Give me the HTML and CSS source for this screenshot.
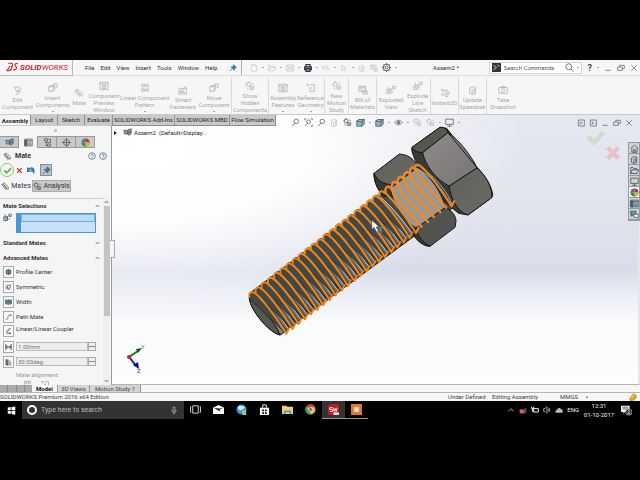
FILE: index.html
```html
<!DOCTYPE html>
<html lang="en">
<head>
<meta charset="utf-8">
<title>Assem2 - SOLIDWORKS</title>
<link rel="stylesheet" href="styles.css">
</head>
<body>
<svg class="defs" width="0" height="0" aria-hidden="true">
  <defs>
    <symbol id="clip" viewBox="0 0 12 12"><path d="M2 2.500 7.500 9c1.600 1.500 3.500-.2 2.300-1.800L5 1.800C3.800.8 2.300 2 3.300 3.300L8 8.500M2 2.500C.8 4 2 5 3 6l4 4.500"/></symbol>
    <symbol id="boxes" viewBox="0 0 12 12"><path d="M1 4.500 3 3h5v5l-2 2H1zM1 4.500h5V10M6 4.500 8 3M7 2V1h4v4H9"/></symbol>
    <symbol id="part" viewBox="0 0 12 12"><path d="M2 2.500h6l2 2-2 3H4zM4 7.500l4-3M5 9l4-1M3 11h4"/></symbol>
    <symbol id="preview" viewBox="0 0 12 12"><path d="M1 1.500h10v9H1zM1 3.500h10M4 5v4h4V5.500zM6 5v4"/></symbol>
    <symbol id="pattern" viewBox="0 0 12 12"><path d="M2 1.500h3v3H2zM7 1.500h3v3H7zM2 7h3v3H2zM7 7h3v3H7zM5 3h2M5 8.500h2"/></symbol>
    <symbol id="fast" viewBox="0 0 12 12"><path d="M1 4h9v7H1zM3 9l6-7M4 6l4 3M8 1l2 2M3 6v3h5"/></symbol>
    <symbol id="gears" viewBox="0 0 12 12"><circle cx="4" cy="4" r="2.500"/><circle cx="8" cy="8" r="2.500"/><path d="M4 .5v2M.5 4h2M8 7v2M7 8h2M8 2l2 2M2 8l2 2"/></symbol>
    <symbol id="geom" viewBox="0 0 12 12"><path d="M2 1v3M.5 2.500h3M5 2h5v8H5V5M5 5l2 1"/></symbol>
    <symbol id="bom" viewBox="0 0 12 12"><path d="M1 1.500h8v6H1zM1 3.500h8M4 1.500v6M6 7h5v4H6zM7 9h3"/></symbol>
    <symbol id="explode" viewBox="0 0 12 12"><path d="M1 5h5v5H1zM6 5l2-2M8 1.500h3v3H8zM3 2v2M8 7v2"/><circle cx="4" cy="7" r="1.500"/></symbol>
    <symbol id="instant" viewBox="0 0 12 12"><path d="M1 2l5 1 4 5-4-1zM6 3l2-1 3 4-1 2M2 7l7 4M2 7v2M9 11V9"/></symbol>
    <symbol id="camera" viewBox="0 0 12 12"><path d="M1 3h10v7H1zM4 3V1.500h4V3"/><circle cx="6" cy="6.500" r="2"/></symbol>
    <symbol id="doc" viewBox="0 0 12 12"><path d="M2.500 1h5l2.500 2.500V11H2.500zM7.500 1v2.500H10"/></symbol>
    <symbol id="folder" viewBox="0 0 12 12"><path d="M1 10V2h3l1 1.500h4V5M1 10l2-5h8.500l-2 5z"/></symbol>
    <symbol id="save" viewBox="0 0 12 12"><path d="M1 1.500h10v9H1zM3 1.500V5h6V1.500M3 10.500V7h6v3.500"/></symbol>
    <symbol id="print" viewBox="0 0 12 12"><path d="M3 4.500V1h6v3.500M1 4.500h10v4H1z"/><path d="M3 7v4h6V7z" fill="#6fa5dd"/></symbol>
    <symbol id="undo" viewBox="0 0 12 12"><path d="M1 2v5h4M1 6c3-5 8-4 8 0v4M5 5c2-1 2 0 2 3"/></symbol>
    <symbol id="arrow" viewBox="0 0 12 12"><path d="M3 1v9l2.500-2.500H9zM6 8l1.500 3"/></symbol>
    <symbol id="lens" viewBox="0 0 12 12"><circle cx="7" cy="4.500" r="3"/><path d="M5 7 1.500 11"/></symbol>
    <symbol id="lensbox" viewBox="0 0 12 12"><circle cx="6" cy="5" r="2.500"/><path d="M4.500 7 1.500 10.500M1 3V1h2M9 1h2v2M11 9v2H9"/></symbol>
    <symbol id="cube" viewBox="0 0 12 12"><path d="M1 4 4 2h7v6l-3 3H1z" fill="#83b8cf"/><path d="M1 4h7v7M8 4l3-2"/><path d="M4 2h7L8 4H1z" fill="#d9edf3"/></symbol>
    <symbol id="eye" viewBox="0 0 12 12"><path d="M1 6c3-4 7-4 10 0-3 4-7 4-10 0z"/><circle cx="6" cy="6" r="1.500" fill="#555"/></symbol>
    <symbol id="ball" viewBox="0 0 12 12"><circle cx="6" cy="6" r="5" fill="#eee"/><path d="M6 6V1a5 5 0 0 0-5 5z" fill="#3c78c8" stroke="none"/><path d="M6 6h5a5 5 0 0 0-5-5z" fill="#d32b22" stroke="none"/><path d="M6 6v5a5 5 0 0 0 5-5z" fill="#eab421" stroke="none"/><path d="M6 6H1a5 5 0 0 0 5 5z" fill="#38923f" stroke="none"/></symbol>
    <symbol id="screen" viewBox="0 0 12 12"><path d="M1 1.500h10v7H1zM6 8.500V11M3 11h6"/></symbol>
    <symbol id="pin" viewBox="0 0 12 12"><path d="M7 1l4 4-1 .5-2 2v2L2.800 4.500h2l2-2zM5 7 1.500 10.500" fill="#2f83a8"/></symbol>
    <symbol id="restore" viewBox="0 0 12 12"><path d="M4 4V2h7v5H9M1 4.500h7v5H1z"/></symbol>
    <symbol id="close" viewBox="0 0 12 12"><path d="M2 2l8 8M10 2l-8 8"/></symbol>
    <symbol id="min" viewBox="0 0 12 12"><path d="M2 9.500h8"/></symbol>
    <symbol id="pane-l" viewBox="0 0 12 12"><path d="M2 1.500h9v9H2zM5 4v4M8 6H6"/></symbol>
    <symbol id="help" viewBox="0 0 12 12"><circle cx="6" cy="6" r="5"/><path d="M4.500 5c0-2 3.500-2 3.300 0C7.600 6 6 6 6 7.500M6 8.500v1"/></symbol>
    <symbol id="check" viewBox="0 0 12 12"><path d="M1 6.500 3 5l2 2.500L10 2l1.500 1.500L5 10.500z"/></symbol>
    <symbol id="list" viewBox="0 0 12 12"><path d="M1 1.500h10v9H1zM1 3h10M5 5h5M5 7h5M5 9h5"/><path d="M1 3h3v7.500H1z" fill="#356f96"/></symbol>
    <symbol id="target" viewBox="0 0 12 12"><circle cx="6" cy="6" r="4"/><path d="M6 0v12M0 6h12"/></symbol>
    <symbol id="tree" viewBox="0 0 12 12"><path d="M2 1h4v3H2zM4 4v6h3M6 8h4v3H6zM7 1.500h3V6H4"/></symbol>
    <symbol id="asm" viewBox="0 0 12 12"><path d="M1 3h5v5H2zM7 2l4-1v6L8 10 6 8z" fill="#6fa3be"/><path d="M8 4v4M9.500 4v3"/></symbol>
    <symbol id="house" viewBox="0 0 12 12"><path d="M1 6 6 1.500 11 6M2.500 5.500V11h7V5.500M5 11V7.500h2V11"/></symbol>
    <symbol id="books" viewBox="0 0 12 12"><path d="M2 4l3-2 4 1v7l-3 1.500L2 10zM5 4.500V11M7.500 4v6"/></symbol>
    <symbol id="chat" viewBox="0 0 12 12"><path d="M1 1.500h7v5H4L2 8.500V6.500H1z" fill="#5b98b8"/><path d="M5 5.500h6v4h-1v1.500L8 9.500H5z" fill="#fff"/></symbol>
    <symbol id="profile" viewBox="0 0 12 12"><circle cx="6" cy="6" r="4.500" fill="#9cc7d5"/><path d="M3 4h6v4H3zM6 2v8"/></symbol>
    <symbol id="symm" viewBox="0 0 12 12"><path d="M4 3h5v5H4zM1 10l3-3M9 3l2-2M2 4v4M4 10h4"/></symbol>
    <symbol id="width" viewBox="0 0 12 12"><path d="M1 2l3 1v7L1 9zM11 2 8 3v7l3-1z" fill="#5796ae"/><path d="M5 3v4M7 3v4M6 1v10"/></symbol>
    <symbol id="path" viewBox="0 0 12 12"><path d="M1 10c3 1 4-1 4-3 0-3 1-4 3-4h2M9 1l2 2-2 2"/></symbol>
    <symbol id="linear" viewBox="0 0 12 12"><path d="M10 1 5 6M8 1 3 6M3 6v2h3M2 10h8M7 9l3 1-3 1.500"/></symbol>
    <symbol id="dist" viewBox="0 0 12 12"><path d="M1.500 1v10M10.500 1v10M2 6h8M4 4 2 6l2 2M8 4l2 2-2 2" stroke-width="1.500"/></symbol>
    <symbol id="angle" viewBox="0 0 12 12"><path d="M2 1v10h9M2 2c5 0 8 3 8 7M4 11V4l5 6"/><path d="M2 3l3 1v7H2z" fill="#4b93b0"/></symbol>
    <linearGradient id="faceA" x1="0" y1="0" x2="1" y2="1"><stop offset="0" stop-color="#918c8c"/><stop offset="1" stop-color="#777273"/></linearGradient>
    <linearGradient id="faceB" x1="0" y1="0" x2="1" y2="1"><stop offset="0" stop-color="#5f625b"/><stop offset="1" stop-color="#6d6967"/></linearGradient>
    <g id="groove" fill="none">
      <path d="M-11 15-2-7 14-3 108 100 101 123 88 110Z" fill="#454742" stroke="#1c1c1a" stroke-width="2"/>
      <path d="M10-1C38 19 78 69 104 107" stroke="#72746f" stroke-width="7"/>
      <path d="M14 0C42 22 82 70 106 104" stroke="#c6c6c2" stroke-width="3"/>
      <path d="M19 0C46 22 86 68 108 100" stroke="#242522" stroke-width="2"/>
    </g>
    <path id="coil" d="M-9 12C-13 2-7-7 2-3 22 6 72 74 101 121L110 103" fill="none" stroke="#ef8720" stroke-width="6" stroke-linejoin="round"/>
    <path id="turn" d="M-8 16C-12 3-4-7 4-2 12 4 12 14 20 26L100 117" fill="none" stroke="#f18a22" stroke-width="7" stroke-linecap="round"/>
  </defs>
</svg>

<div class="app">
  <header class="titlebar">
    <div class="brand">
      <svg class="ds" viewBox="0 0 24 20"><path d="M4 3h6c4 1 3 5-1 7M7 8l-5 9c6 0 9-4 9-8M22 4c-5-2-7 2-4 5s1 7-5 6" fill="none" stroke="#c8232c" stroke-width="2"/></svg>
      <span><b>SOLID</b>WORKS</span>
    </div>
    <nav class="menu"><a href="#">File</a><a href="#">Edit</a><a href="#">View</a><a href="#">Insert</a><a href="#">Tools</a><a href="#">Window</a><a href="#">Help</a></nav>
    <svg class="ic pin"><use href="#pin"/></svg>
    <div class="quick">
      <button aria-label="New"><svg class="ic"><use href="#doc"/></svg></button><i></i>
      <button aria-label="Open"><svg class="ic"><use href="#folder"/></svg></button><i></i>
      <button aria-label="Save"><svg class="ic"><use href="#save"/></svg></button><i></i>
      <button aria-label="Print" class="on"><svg class="ic"><use href="#print"/></svg></button><i></i>
      <button aria-label="Undo"><svg class="ic"><use href="#undo"/></svg></button><i></i>
      <button aria-label="Select"><svg class="ic"><use href="#arrow"/></svg></button><i></i>
      <button aria-label="Rebuild"><svg class="ic"><use href="#books"/></svg></button>
      <button aria-label="Properties"><svg class="ic"><use href="#bom"/></svg></button>
      <button aria-label="Options" class="on thin"><svg class="ic" viewBox="0 0 12 12"><circle cx="6" cy="6" r="4.500"/><circle cx="6" cy="6" r="2"/><path d="M6 0v2M6 10v2M0 6h2M10 6h2M2 2l1 1M9 9l1 1M10 2 9 3M3 9l-1 1"/></svg></button><i></i>
    </div>
    <div class="doc-name">Assem2 *</div>
    <div class="search">
      <svg class="ic" viewBox="0 0 12 12"><path d="M0 0h12v12H0z" fill="#333" stroke="none"/><path d="M2 3l4 3-4 3M7 2l3 3" stroke="#fff"/></svg>
      <input type="text" aria-label="Search Commands" placeholder="Search Commands">
      <svg class="ic" viewBox="0 0 12 12"><circle cx="5" cy="5" r="4"/><path d="m8 8 3.500 3.500"/></svg><i></i>
    </div>
    <div class="winbtns">
      <button aria-label="Help"><b>?</b></button><i></i>
      <button aria-label="Minimize"><svg class="ic"><use href="#min"/></svg></button>
      <button aria-label="Restore"><svg class="ic"><use href="#restore"/></svg></button>
      <button aria-label="Close"><svg class="ic"><use href="#close"/></svg></button>
    </div>
  </header>

  <div class="ribbon">
    <button class="w35"><svg><use href="#part"/></svg>Edit<br>Component</button>
    <button class="w35"><svg><use href="#boxes"/></svg>Insert<br>Components<i></i></button>
    <button class="w18"><svg><use href="#clip"/></svg>Mate</button>
    <button class="w32"><svg><use href="#preview"/></svg>Component<br>Preview<br>Window</button>
    <button class="w49"><svg><use href="#pattern"/></svg>Linear Component<br>Pattern<i></i></button>
    <button class="w28"><svg><use href="#fast"/></svg>Smart<br>Fasteners</button>
    <button class="w35 end"><svg><use href="#boxes"/></svg>Move<br>Component<i></i></button>
    <button class="w37 end"><svg><use href="#gears"/></svg>Show<br>Hidden<br>Components</button>
    <button class="w28"><svg><use href="#preview"/></svg>Assembly<br>Features<i></i></button>
    <button class="w28 end"><svg><use href="#geom"/></svg>Reference<br>Geometry<i></i></button>
    <button class="w24 end"><svg><use href="#gears"/></svg>New<br>Motion<br>Study</button>
    <button class="w28 end"><svg><use href="#bom"/></svg>Bill of<br>Materials</button>
    <button class="w28"><svg><use href="#explode"/></svg>Exploded<br>View</button>
    <button class="w26 end"><svg><use href="#explode"/></svg>Explode<br>Line<br>Sketch</button>
    <button class="w28 end"><svg><use href="#instant"/></svg>Instant3D</button>
    <button class="w28 end"><svg><use href="#books"/></svg>Update<br>Speedpak</button>
    <button class="w32"><svg><use href="#camera"/></svg>Take<br>Snapshot</button>
  </div>

  <main class="stage">
    <div class="tabrow">
      <div class="tabs"><button class="t31 active">Assembly</button><button class="t26">Layout</button><button class="t26">Sketch</button><button class="t28">Evaluate</button><button class="t63">SOLIDWORKS Add-Ins</button><button class="t54">SOLIDWORKS MBD</button><button class="t46">Flow Simulation</button></div>
      <div class="headsup">
        <svg class="ic"><use href="#lens"/></svg><svg class="ic"><use href="#lensbox"/></svg><svg class="ic"><use href="#lens"/></svg><svg class="ic dim"><use href="#books"/></svg><svg class="ic"><use href="#gears"/></svg><svg class="ic"><use href="#cube"/></svg><i></i><svg class="ic"><use href="#cube"/></svg><i></i><svg class="ic"><use href="#eye"/></svg><i></i><svg class="ic dim"><use href="#gears"/></svg><svg class="ic dim"><use href="#gears"/></svg><i></i><svg class="ic"><use href="#screen"/></svg><i></i>
      </div>
      <div class="docbtns">
        <button aria-label="Collapse left"><svg class="ic"><use href="#pane-l"/></svg></button><button aria-label="Collapse right"><svg class="ic"><use href="#pane-l"/></svg></button><button aria-label="Minimize document"><svg class="ic"><use href="#min"/></svg></button><button aria-label="Restore document"><svg class="ic"><use href="#restore"/></svg></button><button aria-label="Close document"><svg class="ic"><use href="#close"/></svg></button>
      </div>
    </div>

    <div class="work">
      <aside class="panel">
        <div class="grip"></div>
        <div class="ptabs">
          <button aria-label="Feature tree"><svg class="ic"><use href="#asm"/></svg></button><button aria-label="Property manager" class="active"><svg class="ic"><use href="#list"/></svg></button><button aria-label="Configurations"><svg class="ic"><use href="#tree"/></svg></button><button aria-label="Dimensions"><svg class="ic"><use href="#target"/></svg></button><button aria-label="Appearances"><svg class="ic"><use href="#ball"/></svg></button>
        </div>
        <div class="ptitle"><svg class="ic"><use href="#clip"/></svg><h1>Mate</h1><svg class="ic blue"><use href="#help"/></svg><svg class="ic blue"><use href="#help"/></svg></div>
        <div class="pacts">
          <button class="ok" aria-label="OK"><svg class="ic"><use href="#check"/></svg></button>
          <button class="no" aria-label="Cancel"><svg class="ic"><use href="#close"/></svg></button>
          <button class="un" aria-label="Undo"><svg class="ic"><use href="#undo"/></svg></button>
          <button class="keep" aria-label="Keep visible"><svg class="ic"><use href="#pin"/></svg></button>
        </div>
        <div class="mtabs"><button class="active"><svg class="ic"><use href="#clip"/></svg>Mates</button><button><svg class="ic"><use href="#gears"/></svg>Analysis</button></div>
        <div class="pscroll">
          <div class="groups">
            <h2>Mate Selections<svg class="chev" viewBox="0 0 6 4"><path d="m1 3 2-2 2 2"/></svg></h2>
            <div class="sel"><svg class="ic"><use href="#explode"/></svg><div class="selbox"><input type="text" aria-label="Entities to mate"></div></div>
            <h2 class="std">Standard Mates<svg class="chev" viewBox="0 0 6 4"><path d="m1 1 2 2 2-2"/></svg></h2>
            <h2 class="adv">Advanced Mates<svg class="chev" viewBox="0 0 6 4"><path d="m1 3 2-2 2 2"/></svg></h2>
            <button class="mate"><svg><use href="#profile"/></svg>Profile Center</button>
            <button class="mate"><svg><use href="#symm"/></svg>Symmetric</button>
            <button class="mate"><svg><use href="#width"/></svg>Width</button>
            <button class="mate"><svg><use href="#path"/></svg>Path Mate</button>
            <button class="mate coupler"><svg><use href="#linear"/></svg>Linear/Linear Coupler</button>
            <label class="mate"><svg><use href="#dist"/></svg><input type="text" value="1.00mm" aria-label="Distance"><span class="spin"></span></label>
            <label class="mate"><svg><use href="#angle"/></svg><input type="text" value="30.00deg" aria-label="Angle"><span class="spin"></span></label>
            <div class="align">Mate alignment:</div>
            <div class="alignic"><svg class="ic"><use href="#pattern"/></svg><svg class="ic"><use href="#geom"/></svg></div>
          </div>
          <div class="scrollbar"><svg class="chev" viewBox="0 0 6 4"><path d="m1 3 2-2 2 2"/></svg><div class="thumb"></div><svg class="chev" viewBox="0 0 6 4"><path d="m1 1 2 2 2-2"/></svg></div>
        </div>
      </aside>

      <section class="view">
        <div class="flyout"><span class="tri"></span><svg class="ic"><use href="#asm"/></svg>Assem2&nbsp; (Default&lt;Display...</div>
        <div class="handle"></div>
        <svg class="bolt" viewBox="0 0 780 660" role="img" aria-label="Bolt and nut assembly">
          <g stroke="#161616" stroke-width="3" stroke-linejoin="round">
            <path d="M28 535 38 513 545 132 640 262 120 645C90 640 32 572 28 535Z" fill="#4b4d48"/>
            <path d="M515 88 516 82 600 22 620 25 708 139C735 165 756 200 758 225L755 233 684 285 656 280C590 230 520 130 515 88Z" fill="#383a36"/>
            <path d="M516 82 600 22C612 21 620 26 624 38L548 98C534 98 522 93 516 82Z" fill="#555850"/>
            <path d="M548 98 624 38C655 56 700 116 711 144L628 198C587 180 554 132 548 98Z" fill="url(#faceA)"/>
            <path d="M628 198 711 144C740 167 760 210 755 233L684 285C651 277 630 230 628 198Z" fill="url(#faceB)"/>
            <path d="M624 38 708 139" fill="none"/>
            <path d="M402 160 478 102C504 104 520 116 532 136L456 205 430 228C415 210 402 188 402 160Z" fill="url(#faceB)"/>
            <path d="M402 160C412 182 430 193 456 194L475 230 430 228C414 211 402 188 402 160Z" fill="#373934"/>
            <path d="M452 205 532 142C570 165 610 224 616 263L530 326C490 300 455 248 452 205Z" fill="#9b9894"/>
            <path d="M525 326 616 263C636 271 648 288 648 304L645 322 570 379C546 374 529 354 525 326Z" fill="#51534e"/>
            <path d="M515 330C520 352 544 379 570 379 545 365 532 345 527 325Z" fill="#353632"/>
            <path d="M28 535C48 545 104 601 120 645 88 638 31 572 28 535Z" fill="#555851"/>
            <path d="M28 535C46 533 112 594 133 636L120 645C104 601 48 545 28 535Z" fill="#858681"/>
          </g>
          <path d="M530 146C574 164 622 225 631 258M542 142C585 170 627 220 636 256" fill="none" stroke="#b3b0aa" stroke-width="3"/>
          <use href="#groove" x="38" y="520"/><use href="#groove" x="57" y="506"/><use href="#groove" x="75" y="491"/><use href="#groove" x="94" y="477"/><use href="#groove" x="112" y="462"/><use href="#groove" x="131" y="448"/><use href="#groove" x="149" y="434"/><use href="#groove" x="168" y="419"/><use href="#groove" x="186" y="405"/><use href="#groove" x="205" y="390"/><use href="#groove" x="223" y="376"/><use href="#groove" x="242" y="362"/><use href="#groove" x="260" y="347"/><use href="#groove" x="279" y="333"/><use href="#groove" x="297" y="318"/><use href="#groove" x="316" y="304"/><use href="#groove" x="334" y="290"/><use href="#groove" x="353" y="275"/><use href="#groove" x="371" y="261"/><use href="#groove" x="390" y="246"/><use href="#groove" x="408" y="232"/>
          <use href="#coil" x="38" y="520"/><use href="#coil" x="57" y="506"/><use href="#coil" x="75" y="491"/><use href="#coil" x="94" y="477"/><use href="#coil" x="112" y="462"/><use href="#coil" x="131" y="448"/><use href="#coil" x="149" y="434"/><use href="#coil" x="168" y="419"/><use href="#coil" x="186" y="405"/><use href="#coil" x="205" y="390"/><use href="#coil" x="223" y="376"/><use href="#coil" x="242" y="362"/><use href="#coil" x="260" y="347"/><use href="#coil" x="279" y="333"/><use href="#coil" x="297" y="318"/><use href="#coil" x="316" y="304"/><use href="#coil" x="334" y="290"/><use href="#coil" x="353" y="275"/><use href="#coil" x="371" y="261"/><use href="#coil" x="390" y="246"/><use href="#coil" x="408" y="232"/><use href="#coil" x="427" y="218"/>
          <use href="#turn" x="445" y="203"/><use href="#turn" x="464" y="189"/><use href="#turn" x="482" y="174"/><use href="#turn" x="501" y="160"/><use href="#turn" x="519" y="146"/><use href="#coil" x="534" y="138"/>
          <path d="M395 300v29l7-7 8 15 6-4-7-12 9-1Z" fill="#fff" stroke="#333" stroke-width="2"/>
          <path d="M412 322 428 318 424 345Z" fill="#557d77"/>
        </svg>
        <svg class="confirm" viewBox="0 0 40 30"><path d="m2 10 4-3 4 4 8-8 3 3-11 12z" fill="#c9dfca"/><path d="m25 18 4 4 4-4 3 3-4 4 4 4-3 3-4-4-4 4-3-3 4-4-4-4z" fill="#e6c3c8"/></svg>
        <svg class="triad" viewBox="0 0 22 30"><path d="M3 13 12 7" stroke="#23722c" stroke-width="2"/><path d="m10 5 6-1-4 5z" fill="#14521c"/><path d="M4 14 10 22" stroke="#1b1bb0" stroke-width="2"/><path d="m7 21 5-3 1 7z" fill="#10107f"/><circle cx="3" cy="13" r="2" fill="#d3202c"/><text x="15" y="5" fill="#4a8050">Y</text><text x="11" y="29" fill="#4545b5">Z</text></svg>
        <nav class="taskpane" aria-label="Task pane">
          <button aria-label="Resources"><svg class="ic"><use href="#house"/></svg></button><button aria-label="Design library"><svg class="ic"><use href="#books"/></svg></button><button aria-label="File explorer"><svg class="ic"><use href="#folder"/></svg></button><button aria-label="View palette"><svg class="ic"><use href="#screen"/></svg></button><button aria-label="Appearances" class="active"><svg class="ic"><use href="#ball"/></svg></button><button aria-label="Custom properties"><svg class="ic"><use href="#list"/></svg></button><button aria-label="Forum"><svg class="ic"><use href="#chat"/></svg></button>
        </nav>
      </section>
    </div>
  </main>

  <div class="sheets"><div class="nav"><span></span><span></span><span></span><span></span></div><button class="s26 active">Model</button><button class="s32">3D Views</button><button class="s51">Motion Study 1</button></div>
  <footer class="status"><span class="prod">SOLIDWORKS Premium 2016 x64 Edition</span><span class="st1">Under Defined</span><span class="st2">Editing Assembly</span><span class="st3">MMGS</span><span class="up"></span><svg class="tag" viewBox="0 0 12 12"><path d="m1 8 6-7 4 3-1 4-5 4-3-1z" fill="#dcae20" stroke="#9b7812"/><path d="m3 8 4-5" stroke="#fff09a"/></svg></footer>
</div>

<div class="taskbar">
  <button class="start" aria-label="Start"><svg viewBox="0 0 12 12"><path d="M1 2l4-.7v4.400H1zM6 1.200 11 .5v5.200H6zM1 6.500h4v4.200L1 10zM6 6.500h5v5l-5-.7z" fill="#fff"/></svg></button>
  <label class="cortana"><span class="ring"></span><input type="text" aria-label="Search" placeholder="Type here to search"><svg viewBox="0 0 12 12"><path d="M4.500 1h3v6h-3zM3 5v2c0 3 6 3 6 0V5M6 9v3" fill="none" stroke="#bbb"/></svg></label>
  <nav class="apps">
    <button aria-label="Task view"><svg viewBox="0 0 12 12"><path d="M3 2h6v8H3zM1.500 3H.5v6h1M10.500 3h1v6h-1" fill="none" stroke="#ddd"/></svg></button>
    <button aria-label="Mail"><svg viewBox="0 0 12 12"><path d="M0 4 6 1l6 3v7H0z" fill="#fff"/><path d="m1 4.500 10 .5-4 1 1 2.500L6 7z" fill="#111"/></svg></button>
    <button aria-label="Browser"><svg viewBox="0 0 12 12"><circle cx="6" cy="6" r="5.500" fill="#3a9ad2"/><path d="M2 3c3-2 6-1 8 1L5 7c-2 0-3-2-3-4z" fill="#d6eef8"/><path d="M7 7h4v5H7z" fill="#a9c88c"/></svg></button>
    <button aria-label="Store"><svg viewBox="0 0 12 12"><path d="M1 4h10v8H1z" fill="#fff"/><path d="M4 4V1h4v3" fill="none" stroke="#fff"/><path d="M3.500 6h2v2h-2zM6.500 6h2v2h-2zM3.500 9h2v2h-2zM6.500 9h2v2h-2z" fill="#111"/></svg></button>
    <button aria-label="File Explorer"><svg viewBox="0 0 12 12"><path d="M0 2h5l1 1h6v8H0z" fill="#f2d16b"/><path d="M2 7h8v4H8V9H4v2H2z" fill="#45a1d8"/></svg></button>
    <button aria-label="Chrome"><svg viewBox="0 0 12 12"><circle cx="6" cy="6" r="5.500" fill="#e6ba27"/><path d="M6 6 1.200 3A5.500 5.500 0 0 1 11 3.500H6z" fill="#da4437"/><path d="M1.200 3 4 7l2 1-1 3.500A5.500 5.500 0 0 1 1.200 3z" fill="#3d9d55"/><circle cx="6" cy="6" r="2.500" fill="#fff"/><circle cx="6" cy="6" r="2" fill="#4285d9"/></svg></button>
    <button aria-label="SOLIDWORKS 2016" class="run cur"><svg viewBox="0 0 12 12"><path d="M0 2 3 0h9v10l-2 2H0z" fill="#bd1c24"/><path d="M5 4H2v2h3v2H2M6 4l1 4 1-3 1 3 1-4" fill="none" stroke="#fff"/><path d="M6 9h6v3H6z" fill="#ddd"/></svg></button>
    <button aria-label="Recorder" class="run"><svg viewBox="0 0 12 12"><path d="M0 0h12v12H0z" fill="#df7433"/><path d="M3 3h6v6H3z" fill="#f6b98d"/><circle cx="6" cy="6" r="2" fill="#fff"/></svg></button>
  </nav>
  <div class="tray">
    <svg viewBox="0 0 12 12"><path d="m2 8 4-4 4 4" fill="none" stroke="#fff"/></svg>
    <svg viewBox="0 0 12 12"><path d="M3 11 11 2v9z" fill="#555"/><path d="M1 5h6v6H1z" fill="#e0566a"/></svg>
    <svg viewBox="0 0 12 12"><path d="M4 4h7v5H4zM1 1v3h3V1M2.500 4v5" fill="none" stroke="#eee" stroke-width="1.500"/></svg>
    <svg viewBox="0 0 12 12"><path d="M1 4h2l3-3v10L3 8H1zM8 4v4M10 3v6" fill="none" stroke="#ddd"/></svg>
    <svg viewBox="0 0 12 12"><path d="M1 10c-1-3 1-4 2-4 1-4 5-4 6-1 3 0 3 4 2 5z" fill="#bbb"/></svg>
    <span>ENG</span>
    <time>12:31<br>01-10-2017</time>
    <svg class="note" viewBox="0 0 14 14"><path d="M0 1h11v8H5l-2 2V9H0z" fill="#eee"/><path d="M2 3h7M2 5h7" stroke="#555"/><circle cx="10" cy="9" r="4" fill="#222" stroke="#aaa"/><path d="M8.500 8c.5-2 3-1 2.500.5L8.500 11H12" fill="none" stroke="#fff"/></svg>
  </div>
</div>
</body>
</html>
```
FILE: styles.css
```css
* { box-sizing: border-box; }
body { margin: 0; padding-top: 60px; min-height: 100vh; background: #000; color: #333; font: 6px/8px Roboto, "Liberation Sans", sans-serif; }
button, input { font: inherit; color: inherit; margin: 0; padding: 0; border: 0; background: none; border-radius: 0; min-width: 0; outline: 0; }
button { display: flex; flex: none; align-items: center; justify-content: center; white-space: nowrap; }
svg { display: block; flex: none; }
i { width: 0; height: 0; flex: none; border: 1px solid transparent; border-top-color: #555; border-bottom: 0; }
a { color: inherit; text-decoration: none; }
.defs { position: absolute; }
.ic { width: 9px; height: 9px; fill: none; stroke: #555; }
.app { background: #f6f6f6; }

.titlebar { display: flex; align-items: center; height: 16px; border-bottom: 1px solid #dcdcdc; }
.brand { display: flex; align-items: center; gap: 1px; width: 73px; height: 16px; padding-left: 6px; border-right: 1px solid #bbb; border-bottom: 1px solid #bbb; color: #c8232c; font: italic 8px Roboto, sans-serif; }
.ds { width: 13px; height: 12px; }
.menu { display: flex; gap: 6px; padding-left: 12px; width: 156px; }
.pin { width: 8px; height: 8px; stroke: #2f6f90; }
.quick { display: flex; align-items: center; gap: 4px; height: 15px; margin-left: 4px; padding-left: 8px; border-left: 1px solid #aaa; }
.quick .ic { width: 8px; height: 8px; stroke: #c4c4c4; }
.quick .on .ic { stroke: #353b42; stroke-width: 2; }
.quick .thin .ic { width: 9px; height: 9px; stroke-width: 1; }
.doc-name { margin-left: 36px; margin-right: auto; }
.search { display: flex; align-items: center; width: 93px; height: 12px; background: #fff; border: 1px solid #d5d5d5; padding: 0 2px; gap: 3px; }
.search input { flex: 1; width: 0; }
.search input::placeholder { color: #555; }
.winbtns { display: flex; align-items: center; gap: 5px; padding: 0 2px 0 6px; }
.winbtns .ic { width: 8px; height: 8px; }
.winbtns b { font-size: 9px; font-weight: 600; }

.ribbon { display: flex; align-items: center; height: 39px; border-bottom: 1px solid #c9c9c9; color: #a9a9a9; line-height: 7px; }
.ribbon button { display: block; height: 37px; padding-top: 4px; text-align: center; }
.ribbon svg { width: 10px; height: 10px; margin: 0 auto 1px; fill: none; stroke: #b5b5b5; }
.ribbon i { display: block; width: 2px; margin: 3px auto 0; }
.ribbon .end { border-right: 1px solid #dadada; }
.w18 { width: 18px; } .w24 { width: 24px; } .w26 { width: 26px; } .w28 { width: 28px; } .w32 { width: 32px; }
.w35 { width: 35px; } .w37 { width: 37px; } .w49 { width: 49px; }

.stage { background: radial-gradient(ellipse 62% 62% at 20% 12%, #fff 0, #fffffff0 45%, #fff0 100%), linear-gradient(#e6e8f0 0, #dfe2ec 45%, #d8dce9 58%, #eceef5 66%, #fafafc 76%, #fdfdfd 100%); }
.tabrow { display: flex; height: 10px; }
.tabs { display: flex; height: 11px; color: #222; }
.tabs button { height: 11px; background: #c9c9c9; border: 1px solid #8f8f8f; border-width: 0 1px 1px 0; }
.tabs .active { background: #f6f6f6; border-bottom: 0; font-weight: 700; }
.t26 { width: 27px; } .t28 { width: 28px; } .t31 { width: 31px; } .t46 { width: 46px; } .t54 { width: 55px; } .t63 { width: 62px; }
.headsup { display: flex; align-items: center; gap: 4px; height: 15px; margin-left: 15px; }
.headsup .dim { opacity: .35; }
.docbtns { display: flex; align-items: center; gap: 4px; height: 15px; margin-left: auto; padding-right: 7px; }
.docbtns .ic { width: 8px; height: 8px; }

.work { display: grid; grid-template-columns: 112px 1fr; height: 260px; }
.panel { display: flex; flex-direction: column; background: #f5f5f5; border-right: 1px solid #999; border-top: 1px solid #ccc; overflow: hidden; }
.grip { width: 3px; height: 3px; margin: 3px auto 4px; border: 1px solid #999; border-radius: 50%; }
.ptabs { display: flex; height: 12px; flex: none; }
.ptabs button { width: 19px; background: #c9c9c9; border: 1px solid #999; border-left: 0; }
.ptabs .active { background: #f5f5f5; border-bottom: 0; border-top: 0; }
.ptitle { display: flex; align-items: center; height: 16px; padding: 0 4px 0 3px; gap: 3px; flex: none; }
.ptitle h1 { flex: 1; margin: 0; font: 700 7px/9px Roboto, sans-serif; }
.ptitle .blue { width: 8px; height: 8px; stroke: #315b80; }
.pacts { display: flex; align-items: center; height: 12px; gap: 2px; flex: none; }
.ok { width: 14px; height: 14px; border: 1px solid #8fc97e; border-radius: 50%; }
.ok .ic { fill: #5ba83f; stroke: none; }
.no .ic { width: 7px; height: 7px; stroke: #c22; stroke-width: 2; }
.un { width: 13px; }
.un .ic { stroke: #397b9b; stroke-width: 2; }
.keep { width: 12px; height: 12px; background: #b9c5cc; border: 1px solid #7f919c; }
.mtabs { display: flex; height: 12px; margin-top: 4px; flex: none; font-size: 7px; }
.mtabs button { gap: 1px; width: 33px; border-right: 1px solid #aaa; }
.mtabs button + button { width: 38px; background: #c9c9c9; border: 1px solid #aaa; border-left: 0; }
.pscroll { display: flex; flex: 1; min-height: 0; margin-top: 6px; }
.groups { flex: 1; padding-left: 3px; border-top: 1px solid #ccc; overflow: hidden; }
.groups h2 { display: flex; align-items: center; justify-content: space-between; height: 14px; margin: 0; padding-right: 3px; font: 700 6px/8px Roboto, sans-serif; }
.chev { width: 5px; height: 4px; fill: none; stroke: #444; }
.sel { display: flex; gap: 4px; height: 21px; }
.sel .ic { stroke: #28506a; }
.selbox { width: 80px; height: 20px; background: #c9e1f8; border: 1px solid #4a97d8; border-left: 5px solid #4a97d8; }
.selbox input { display: block; width: 100%; height: 8px; border: 1px solid #7aaed9; background: #bcdaf6; }
.groups .std { height: 18px; }
.groups .adv { height: 12px; }
.mate { display: flex; align-items: center; justify-content: flex-start; width: 100%; height: 15px; gap: 2px; }
.coupler { align-items: flex-start; padding-top: 1px; }
.mate svg { width: 11px; height: 12px; padding: 1px; border: 1px solid #aaa; background: #fafafa; fill: none; stroke: #263640; }
.mate input { width: 72px; height: 9px; padding-left: 1px; background: #eee; border: 1px solid #bbb; color: #777; }
.spin { width: 8px; height: 9px; margin-left: -2px; border: 1px solid #aaa; background: linear-gradient(#eee 3px, #888 3px, #888 4px, #eee 4px); }
.align { padding: 2px 0 0 13px; color: #999; height: 11px; }
.alignic { display: flex; gap: 9px; padding-left: 20px; opacity: .5; }
.scrollbar { display: flex; flex-direction: column; align-items: center; gap: 2px; width: 7px; margin-right: 1px; padding: 2px 0; background: #f0f0f0; }
.thumb { width: 6px; height: 110px; margin-bottom: auto; background: #c4c4c4; }

.view { position: relative; border-right: 2px solid #e4e6ec; border-bottom: 1px solid #b5b5b5; }
.flyout { display: flex; align-items: center; gap: 2px; padding: 3px 0 0 2px; color: #222; }
.tri { border: 2px solid transparent; border-left: 3px solid #222; border-right: 0; margin-right: 4px; }
.handle { position: absolute; left: -2px; top: 115px; width: 5px; height: 18px; background: #f6f6f6; border: 1px solid #aaa; border-left: 0; }
.bolt { position: absolute; left: 128px; top: -5px; width: 260px; height: 220px; }
.confirm { position: absolute; right: 14px; top: 1px; width: 40px; height: 34px; }
.triad { position: absolute; left: 14px; bottom: 10px; width: 22px; height: 30px; font-size: 6px; }
.taskpane { position: absolute; right: -2px; top: 17px; width: 12px; border: 1px solid #999; }
.taskpane button { width: 10px; height: 11px; background: #d2d2d2; border-bottom: 1px solid #999; }
.taskpane .active { background: #fff; }
.taskpane .ic { stroke: #2f4f62; }

.sheets { display: flex; height: 8px; color: #444; border-bottom: 1px solid #b5b5b5; }
.sheets button { background: #d4d4d4; border-right: 1px solid #999; }
.sheets .active { background: #f6f6f6; color: #111; font-weight: 700; }
.s26 { width: 26px; } .s32 { width: 32px; } .s51 { width: 51px; }
.nav { display: flex; gap: 1px; width: 32px; background: #888; }
.nav span { flex: 1; background: #aaa; }
.status { display: flex; align-items: center; height: 8px; line-height: 8px; color: #444; white-space: nowrap; }
.prod { margin-right: auto; }
.st1 { width: 44px; } .st2 { width: 68px; } .st3 { width: 26px; }
.up { margin-right: 41px; border: 1px solid transparent; border-bottom: 2px solid #555; border-top: 0; }
.tag { width: 8px; height: 8px; margin-right: 3px; }

.taskbar { display: flex; height: 18px; color: #eee; }
.start { width: 22px; }
.start svg { width: 9px; height: 9px; }
.cortana { display: flex; align-items: center; width: 162px; padding: 0 6px 0 5px; background: #333; }
.ring { width: 10px; height: 10px; border: 2px solid #fff; border-radius: 50%; }
.cortana input { flex: 1; padding-left: 4px; font-size: 7px; }
.cortana input::placeholder { color: #bbb; }
.cortana svg { width: 8px; height: 9px; }
.apps { display: flex; }
.apps button { width: 23px; border-bottom: 1px solid transparent; }
.apps svg { width: 11px; height: 11px; }
.apps .run { border-color: #999; }
.apps .cur { background: #333; }
.tray { display: flex; align-items: center; gap: 4px; margin-left: auto; padding-right: 8px; }
.tray svg { width: 8px; height: 8px; }
.tray time { width: 32px; text-align: center; line-height: 9px; margin-right: 2px; }
.tray .note { width: 11px; height: 11px; }
```
